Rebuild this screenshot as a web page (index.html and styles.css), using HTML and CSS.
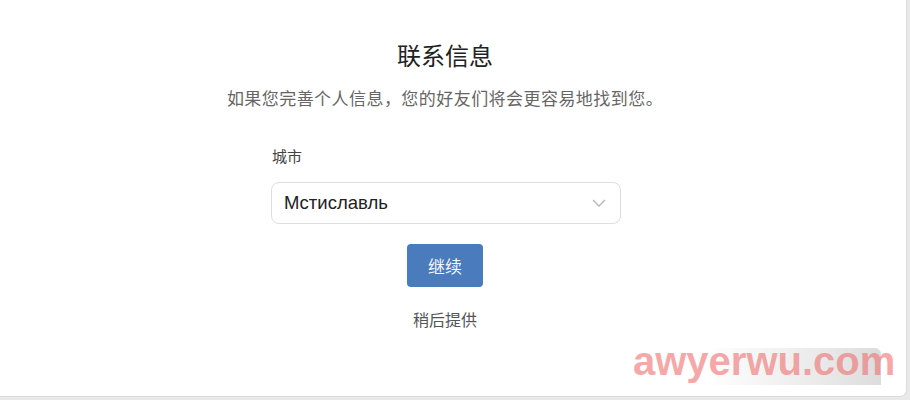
FILE: index.html
```html
<!DOCTYPE html>
<html lang="zh">
  <head>
    <meta charset="utf-8" />
    <title>联系信息</title>
    <link rel="stylesheet" href="styles.css">
  </head>

  <body>
    <div class="card">
      <h1 class="title">联系信息</h1>
      <p class="subtitle">如果您完善个人信息，您的好友们将会更容易地找到您。</p>

      <div class="field">
        <div class="field-label">城市</div>
        <div class="select">
          <span class="select-value">Мстиславль</span>
          <svg class="chevron" width="14" height="8" viewBox="0 0 14 8">
            <path d="M1 1 L7 7 L13 1" fill="none" stroke="#b5b5b5" stroke-width="1.3" />
          </svg>
        </div>
      </div>

      <button type="button" class="btn-continue">继续</button>
      <div class="later">稍后提供</div>

      <!-- watermark -->
      <div class="mark-shade"></div>
      <div class="mark">awyerwu.com</div>
    </div>
  </body>
</html>
```

FILE: styles.css
```css
body {
  margin: 0;
  background-color: #e9e9e9;
  font-family: "Liberation Sans", "Noto Sans CJK SC", sans-serif;
}
.card {
  position: relative;
  box-sizing: border-box;
  width: 907px;
  height: 397px;
  background-color: #fff;
  border-right: 1px solid #dcdcdc;
  border-bottom: 1px solid #dcdcdc;
  border-bottom-right-radius: 7px;
  display: flex;
  flex-direction: column;
  align-items: center;
  padding: 41px 16px 0 0;
  overflow: hidden;
}
.title {
  margin: 0;
  font-size: 24px;
  line-height: 32px;
  font-weight: normal;
  color: #222;
}
.subtitle {
  margin: 15px 0 0;
  font-size: 17px;
  line-height: 24px;
  letter-spacing: 0.45px;
  color: #666;
}
.field {
  width: 350px;
  margin-top: 34px;
  margin-left: 2px;
}
.field-label {
  font-size: 15px;
  line-height: 22px;
  color: #444;
  padding-left: 1px;
}
.select {
  margin-top: 14px;
  height: 40px;
  border: 1px solid #dedede;
  border-radius: 8px;
  display: flex;
  align-items: center;
  justify-content: space-between;
  padding: 0 14px 0 12px;
}
.select-value {
  font-size: 18.5px;
  color: #222;
}
.chevron {
  display: block;
}
.btn-continue {
  margin-top: 20px;
  width: 76px;
  height: 43px;
  border: none;
  border-radius: 4px;
  background-color: #4a7bbd;
  color: #f2f6fb;
  font-family: "Noto Sans CJK SC", sans-serif;
  font-size: 17px;
  cursor: pointer;
}
.later {
  margin-top: 23px;
  font-size: 16px;
  line-height: 22px;
  color: #555;
}
.mark-shade {
  position: absolute;
  left: 715px;
  top: 348px;
  width: 166px;
  height: 37px;
  border-radius: 0 6px 0 0;
  background: linear-gradient(to right, #fdfdfd, #ebebeb 60%, #dcdcdc);
}
.mark {
  position: absolute;
  left: 633px;
  top: 339px;
  font-size: 40px;
  font-weight: bold;
  color: rgba(240, 110, 110, 0.6);
}
```
